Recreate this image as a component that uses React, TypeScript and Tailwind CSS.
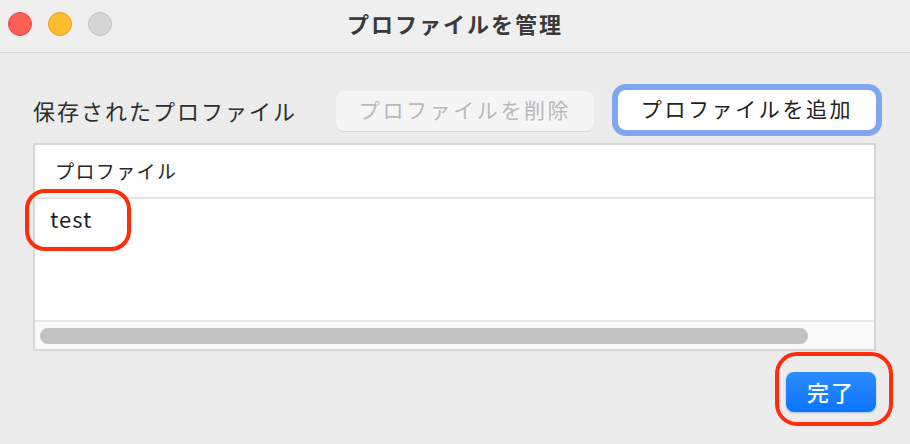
import React from "react";

export default function App() {
  const font = { fontFamily: '"Noto Sans CJK JP", "Noto Sans", sans-serif' };
  return (
    <div
      className="relative w-[910px] h-[444px] overflow-hidden bg-[#ececec] text-[#2b2b2b]"
      style={font}
    >
      {/* Title bar */}
      <div className="relative h-[53px] bg-[#efefef] border-b border-[#d3d3d3] flex items-center justify-center">
        <div className="absolute left-[8px] top-[12px] flex gap-[16px]">
          <div className="w-[24px] h-[24px] rounded-full bg-[#ff5f57] border border-[#e2463f]" />
          <div className="w-[24px] h-[24px] rounded-full bg-[#febc2e] border border-[#dfa125]" />
          <div className="w-[24px] h-[24px] rounded-full bg-[#d6d6d6] border border-[#c2c2c2]" />
        </div>
        <div className="text-[22px] font-bold tracking-[2px] text-[#3a3a3a] -mt-[5px]">
          プロファイルを管理
        </div>
      </div>

      <div className="pl-[33px] pr-[34px]">
        {/* Toolbar row */}
        <div className="mt-[37px] h-[40px] flex items-center">
          <div className="text-[22px] tracking-[2px] text-[#2e2e2e] whitespace-nowrap">
            保存されたプロファイル
          </div>
          <div className="ml-auto flex items-center gap-[24px]">
            <div className="w-[258px] h-[40px] mt-[2px] rounded-[8px] bg-[#f5f5f5] shadow-[0_1px_1px_rgba(0,0,0,0.08)] flex items-center justify-center text-[21px] tracking-[2.6px] text-[#b9b9b9]">
              <span className="-mt-[2px]">プロファイルを削除</span>
            </div>
            <div className="w-[258px] h-[40px] rounded-[8px] bg-white ring-[6px] ring-[#7fa6ef] flex items-center justify-center text-[21px] tracking-[2.6px] text-[#222]">
              <span className="-mt-[2px]">プロファイルを追加</span>
            </div>
          </div>
        </div>

        {/* Table */}
        <div className="mt-[13px] h-[208px] border-2 border-[#d6d6d6] bg-white flex flex-col">
          <div className="h-[54px] bg-[#fdfdfd] border-b-2 border-[#e3e3e3] flex items-center pl-[20px]">
            <span className="text-[19px] tracking-[1.4px] text-[#262626]">プロファイル</span>
          </div>
          <div className="h-[38px] flex items-center pl-[15px]">
            <span className="text-[22px] tracking-[1px] text-[#1f1f1f]">test</span>
          </div>
          <div className="flex-1" />
          <div className="h-[29px] bg-[#f9f9f9] border-t-2 border-[#e6e6e6] flex items-center pl-[5px]">
            <div className="w-[768px] h-[16px] rounded-full bg-[#c2c2c2]" />
          </div>
        </div>

        {/* Done */}
        <div className="mt-[21px] flex justify-end">
          <div className="w-[90px] h-[40px] rounded-[8px] bg-gradient-to-b from-[#2b8dff] to-[#0a73ff] shadow-[0_1px_2px_rgba(0,80,200,0.3)] flex items-center justify-center text-[22px] font-medium tracking-[2px] text-white">
            <span className="-mt-[2px]">完了</span>
          </div>
        </div>
      </div>

      {/* Annotations */}
      <div className="absolute left-[25px] top-[189px] w-[106px] h-[62px] rounded-[20px] border-[4px] border-[#ff2d0a]" />
      <div className="absolute left-[775px] top-[352px] w-[118px] h-[74px] rounded-[22px] border-[4px] border-[#ff2d0a]" />
    </div>
  );
}
